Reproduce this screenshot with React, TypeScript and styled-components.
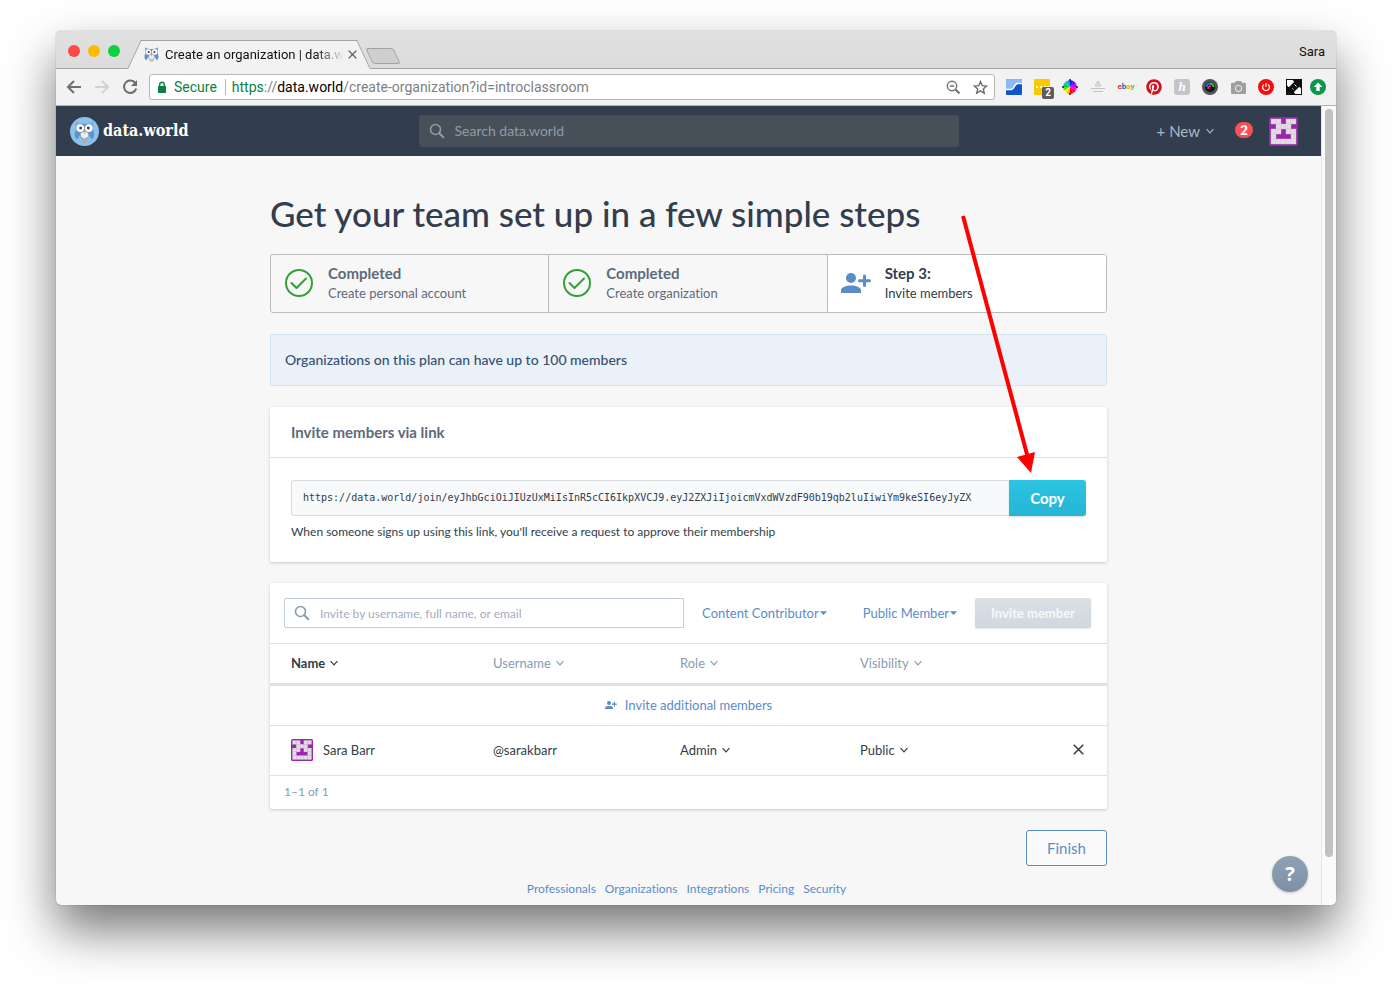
import React from "react";
import styled, { createGlobalStyle, css } from "styled-components";
import { FaPinterest, FaCamera } from "react-icons/fa";

const lato = `Lato, "Open Sans", sans-serif`;
const system = `Roboto, "Liberation Sans", sans-serif`;

const c = {
  navy: "#323d4d",
  ink: "#323d48",
  slate: "#5d6a7b",
  muted: "#8a9bb0",
  blue: "#5a8cc7",
  line: "#dbe1e8",
  page: "#f7f7f7",
  purple: "#9a26ad",
};

const GlobalStyle = createGlobalStyle`
  *, *::before, *::after { box-sizing: border-box; }
  body { margin: 0; background: #fff; font-family: ${lato}; color: ${c.ink}; font-variant-ligatures: no-common-ligatures; }
  button, input, select { font: inherit; color: inherit; margin: 0; }
  button { background: none; border: 0; padding: 0; cursor: pointer; }
  a { color: inherit; text-decoration: none; }
  svg { display: block; flex: none; }
`;

/* ---------- browser window ---------- */

const Desktop = styled.div`
  padding: 31px 56px 80px 56px;
  overflow: hidden;
`;

const Window = styled.div`
  border-radius: 5px;
  overflow: hidden;
  background: ${c.page};
  box-shadow: 0 0 1px rgba(0, 0, 0, 0.6), 0 25px 50px rgba(0, 0, 0, 0.54);
`;

const TabStrip = styled.div`
  display: flex;
  align-items: flex-end;
  height: 38px;
  padding: 0 11px 0 12px;
  background: linear-gradient(#e0e0e0, #dcdcdc);
  box-shadow: inset 0 -1px #a3a3a3;
  font-family: ${system};
`;

const Lights = styled.div`
  display: flex;
  align-self: center;
  gap: 8px;
  margin: 2px 14px 0 0;
`;

const Light = styled.button<{ $color: string }>`
  width: 12px;
  height: 12px;
  border-radius: 50%;
  background: ${(p) => p.$color};
`;

const Tab = styled.div`
  position: relative;
  display: flex;
  align-items: center;
  width: 230px;
  height: 29px;
  padding: 0 10px;
  &::before,
  &::after {
    content: "";
    position: absolute;
    top: 0;
    bottom: 0;
    width: 60%;
    background: #f2f2f2;
    border-top: 1px solid #a3a3a3;
  }
  &::before {
    left: 0;
    transform: skewX(-25deg);
    border-left: 1px solid #a3a3a3;
  }
  &::after {
    right: 0;
    transform: skewX(25deg);
    border-right: 1px solid #a3a3a3;
  }
  > * {
    position: relative;
    z-index: 1;
  }
`;

const TabTitle = styled.span`
  flex: 1;
  margin-left: 6px;
  font-size: 13px;
  line-height: 18px;
  color: #111;
  white-space: nowrap;
  mask-image: linear-gradient(to right, #000 84%, transparent);
`;

const TabClose = styled.button`
  margin: 0 0 0 4px;
  color: #555;
`;

const NewTab = styled.button`
  width: 28px;
  height: 16px;
  margin: 0 0 5px 5px;
  border: 1px solid #a3a3a3;
  border-radius: 3px;
  background: #cfcfcf;
  transform: skewX(25deg);
`;

const Profile = styled.button`
  align-self: center;
  margin-left: auto;
  margin-top: 2px;
  font-size: 13px;
  color: #111;
`;

const Toolbar = styled.div`
  display: flex;
  align-items: center;
  height: 37px;
  padding: 0 10px 0 10px;
  background: #f2f2f2;
  border-bottom: 1px solid #b4b4b4;
  font-family: ${system};
`;

const NavButtons = styled.div`
  display: flex;
  gap: 12px;
  color: #6e6e73;
`;

const NavButton = styled.button`
  &:disabled {
    color: #d2d2d2;
  }
`;

const Omnibox = styled.div`
  display: flex;
  flex: 1;
  align-items: center;
  height: 26px;
  margin: 0 11px;
  padding: 0 6px 0 7px;
  background: #fff;
  border: 1px solid #b6b6b6;
  border-radius: 3px;
  font-size: 14px;
  line-height: 20px;
`;

const Secure = styled.span`
  display: flex;
  align-items: center;
  gap: 7px;
  padding-right: 8px;
  margin-right: 6px;
  border-right: 1px solid #b6b6b6;
  line-height: 16px;
  color: #0b8043;
`;

const Url = styled.span`
  flex: 1;
  color: #808080;
  b {
    font-weight: 400;
    color: #0b8043;
  }
  em {
    font-style: normal;
    color: #000;
  }
`;

const OmniActions = styled.span`
  display: flex;
  gap: 12px;
  color: #6e6e73;
`;

const Extensions = styled.div`
  display: flex;
  gap: 12px;
  margin-right: 8px;
`;

const Extension = styled.button`
  position: relative;
  display: flex;
  align-items: center;
  justify-content: center;
  width: 16px;
  height: 16px;
`;

const ExtCount = styled.span`
  position: absolute;
  left: 8px;
  top: 8px;
  width: 12px;
  height: 12px;
  border-radius: 2px;
  background: #5c5c5c;
  color: #fff;
  font: 700 10px/12px ${system};
`;

const EbayMark = styled.span`
  font: 700 8px/16px ${system};
`;

const Tint = styled.span<{ $color: string }>`
  color: ${(p) => p.$color};
`;

const HoneyMark = styled.span`
  width: 16px;
  height: 16px;
  border-radius: 3px;
  background: #c3c5c8;
  color: #fff;
  font: italic 700 13px/16px "Liberation Serif", serif;
`;

const Viewport = styled.div`
  display: flex;
`;

const Page = styled.div`
  position: relative;
  flex: 1;
  min-width: 0;
`;

const ScrollTrack = styled.div`
  width: 15px;
  padding: 3px 3px 0;
  background: #fafafa;
  border-left: 1px solid #e6e6e6;
`;

const ScrollThumb = styled.div`
  width: 8px;
  height: 94%;
  border-radius: 4px;
  background: #c1c1c1;
`;

/* ---------- site header ---------- */

const SiteHeader = styled.header`
  display: grid;
  grid-template-columns: 1fr 540px 1fr;
  align-items: center;
  height: 50px;
  background: ${c.navy};
`;

const Brand = styled.a`
  display: flex;
  align-items: center;
  gap: 4px;
  padding-left: 14px;
  color: #fff;
  font: 700 16px/24px "DejaVu Serif Condensed", "DejaVu Serif", serif;
`;

const SiteSearch = styled.label`
  display: flex;
  align-items: center;
  gap: 10px;
  height: 32px;
  padding: 0 10px;
  border-radius: 3px;
  background: #475059;
  color: #8d9bab;
  input {
    flex: 1;
    min-width: 0;
    padding: 0;
    border: 0;
    outline: 0;
    background: none;
    font-size: 14px;
    line-height: 20px;
    &::placeholder {
      color: #8d9bab;
      opacity: 1;
    }
  }
`;

const HeaderActions = styled.div`
  display: flex;
  align-items: center;
  justify-content: flex-end;
  padding-right: 23px;
`;

const NewButton = styled.button`
  display: flex;
  align-items: center;
  gap: 6px;
  color: #a9b7cc;
  font-size: 15px;
  line-height: 20px;
`;

const Badge = styled.button`
  height: 16px;
  width: 18px;
  margin: 0 16px 2px 21px;
  border-radius: 8px;
  background: #fb4f57;
  color: #fff;
  font-size: 13px;
  font-weight: 900;
  line-height: 16px;
`;

/* ---------- page body ---------- */

const Main = styled.main`
  position: relative;
  width: 100%;
  max-width: 837px;
  margin: 0 auto;
  padding-top: 34px;
`;

const Title = styled.h1`
  margin: 0 0 18px;
  font-size: 35px;
  font-weight: 500;
  line-height: 46px;
  color: ${c.navy};
`;

const Steps = styled.ol`
  display: grid;
  grid-template-columns: repeat(3, 1fr);
  margin: 0 0 21px;
  padding: 0;
  list-style: none;
  border: 1px solid #b9bcbd;
  border-radius: 3px;
  overflow: hidden;
`;

const Step = styled.li<{ $active?: boolean }>`
  display: flex;
  align-items: center;
  gap: 14px;
  height: 57px;
  padding: 0 14px 2px 13px;
  color: ${(p) => (p.$active ? c.navy : c.slate)};
  background: ${(p) => (p.$active ? "#fff" : "transparent")};
  &:not(:last-child) {
    border-right: 1px solid #b9bcbd;
  }
  strong,
  span {
    display: block;
    line-height: 20px;
  }
  strong {
    font-size: 15px;
  }
  span {
    font-size: 13px;
  }
`;

const Notice = styled.p`
  margin: 0 0 21px;
  padding: 15px 14px;
  border: 1px solid #cfe4f0;
  border-radius: 3px;
  background: #eaf1f9;
  color: #36506f;
  font-size: 14px;
  font-weight: 500;
  line-height: 20px;
`;

const Card = styled.section`
  margin-bottom: 21px;
  background: #fff;
  border-radius: 2px;
  box-shadow: 0 1px 3px rgba(50, 61, 77, 0.25);
`;

const CardTitle = styled.h2`
  margin: 0;
  padding: 15px 21px;
  border-bottom: 1px solid ${c.line};
  font-size: 15px;
  line-height: 20px;
  color: ${c.slate};
`;

const CardBody = styled.div`
  padding: 22px 21px 20px;
`;

const LinkRow = styled.div`
  display: flex;
  height: 36px;
  margin-bottom: 6px;
`;

const LinkInput = styled.input`
  flex: 1;
  min-width: 0;
  padding: 0 9px 0 11px;
  border: 1px solid #d9dcdf;
  border-right: 0;
  border-radius: 3px 0 0 3px;
  background: #f8f9fb;
  font-family: "DejaVu Sans Mono", monospace;
  font-size: 10px;
  line-height: 16px;
`;

const CopyButton = styled.button`
  width: 77px;
  border-radius: 0 3px 3px 0;
  background: linear-gradient(#2bc4e3, #27b5d5);
  box-shadow: 0 1px 2px rgba(0, 0, 0, 0.15);
  color: #fff;
  font-size: 15px;
  font-weight: 700;
`;

const Hint = styled.p`
  margin: 0;
  font-size: 12px;
  line-height: 20px;
`;

const InviteBar = styled.form`
  display: flex;
  align-items: center;
  gap: 18px;
  padding: 15px 16px 15px 14px;
  border-bottom: 1px solid ${c.line};
  font-size: 13px;
`;

const InviteSearch = styled.label`
  display: flex;
  flex: 1;
  align-items: center;
  gap: 10px;
  height: 30px;
  padding: 0 9px;
  border: 1px solid #c3cedb;
  border-radius: 2px 0 0 2px;
  color: ${c.muted};
  input {
    flex: 1;
    min-width: 0;
    padding: 0;
    border: 0;
    outline: 0;
    background: none;
    font-size: 12px;
    &::placeholder {
      color: #a0aebf;
      opacity: 1;
    }
  }
`;

const Picker = styled.span<{ $tone?: string; $spaced?: boolean }>`
  display: inline-flex;
  align-items: center;
  gap: ${(p) => (p.$tone ? 1 : 5)}px;
  color: ${(p) => p.$tone || c.ink};
  ${(p) =>
    p.$spaced &&
    css`
      margin-right: 18px;
    `}
  select {
    appearance: none;
    field-sizing: content;
    padding: 0;
    border: 0;
    outline: 0;
    background: none;
    line-height: 20px;
  }
`;

const InviteButton = styled.button`
  width: 116px;
  height: 30px;
  border-radius: 2px;
  background: linear-gradient(#dbe0e6, #d1d7df);
  box-shadow: 0 1px 2px rgba(0, 0, 0, 0.1);
  color: #f6f8fa;
  font-size: 13px;
  font-weight: 700;
`;

const Members = styled.table`
  width: 100%;
  table-layout: fixed;
  border-collapse: separate;
  border-spacing: 0;
  font-size: 13px;
  line-height: 20px;
  th,
  td {
    padding: 0 21px 2px;
    text-align: left;
    border-bottom: 1px solid ${c.line};
  }
  th {
    height: 42px;
    border-bottom: 3px solid #dbe1e8;
    font-weight: 400;
  }
`;

const NameCol = styled.col`
  width: 202px;
`;
const UserCol = styled.col`
  width: 187px;
`;
const RoleCol = styled.col`
  width: 180px;
`;

const InviteRow = styled.tr`
  td {
    height: 40px;
    text-align: center;
  }
`;

const MemberRow = styled.tr`
  td {
    height: 50px;
  }
  td:last-child {
    padding-right: 23px;
    text-align: right;
  }
`;

const SortButton = styled.button<{ $active?: boolean }>`
  display: inline-flex;
  align-items: center;
  gap: 5px;
  color: ${(p) => (p.$active ? c.ink : c.muted)};
  font-weight: ${(p) => (p.$active ? 700 : 400)};
`;

const LinkButton = styled.button`
  display: inline-flex;
  align-items: center;
  gap: 8px;
  color: ${c.blue};
`;

const Person = styled.span`
  display: flex;
  align-items: center;
  gap: 10px;
`;

const Count = styled.p`
  margin: 0;
  padding: 6px 14px 7px;
  font-size: 12px;
  line-height: 20px;
  color: ${c.muted};
`;

const Actions = styled.div`
  display: flex;
  justify-content: flex-end;
`;

const FinishButton = styled.button`
  width: 81px;
  height: 36px;
  border: 1px solid ${c.blue};
  border-radius: 3px;
  background: #fafafa;
  color: ${c.blue};
  font-size: 15px;
`;

const FooterNav = styled.nav`
  display: flex;
  justify-content: center;
  gap: 9px;
  padding: 14px 4px 7px 0;
  font-size: 12px;
  line-height: 18px;
  color: ${c.blue};
`;

const HelpButton = styled.button`
  position: absolute;
  right: 13px;
  bottom: 13px;
  width: 36px;
  height: 36px;
  border-radius: 50%;
  background: linear-gradient(#8fa1b6, #7e90a6);
  box-shadow: 0 1px 3px rgba(0, 0, 0, 0.2);
  color: #fff;
  font: 700 20px/36px "Noto Sans", sans-serif;
`;

const Arrow = styled.svg`
  position: absolute;
  top: 58px;
  right: 70px;
  pointer-events: none;
`;

/* ---------- icons ---------- */

const Owl = ({ size, disc }: { size: number; disc?: boolean }) => (
  <svg width={size} height={size} viewBox="0 0 30 30" aria-hidden="true">
    {disc && <circle cx="15" cy="15" r="15" fill="#8cc1ec" />}
    <g transform={disc ? undefined : "translate(-6 -6) scale(1.4)"}>
      <path d="M6 5l5 2h8l5-2v9c2 4 1 8-2 9l-2-4c-1 3-3 4-5 4s-4-1-5-4l-2 4c-3-1-4-5-2-9z" fill="#5e92cb" />
      <path d="M6 5l5 2 4 4 4-4 5-2-1 4-8 4-8-4z" fill="#7fb0e0" />
      <path d="M11 17q4-4 8 0v3q-4 5-8 0z" fill="#f2ece4" />
      <circle cx="10.500" cy="11.500" r="4" fill="#fff" />
      <circle cx="19.500" cy="11.500" r="4" fill="#fff" />
      <circle cx="11" cy="11.500" r="1.500" fill="#3a3a3a" />
      <circle cx="19" cy="11.500" r="1.500" fill="#3a3a3a" />
      <path d="M13.500 14h3L15 18z" fill="#e8a552" />
      <path d="M12 24h6M13 26h4" stroke="#b7a48d" strokeWidth="1.200" />
    </g>
  </svg>
);

const avatarCells = ["11011", "01110", "11011", "10001", "11111"];

const Avatar = ({ size }: { size: number }) => (
  <svg width={size} height={size} viewBox="0 0 29 29" role="img" aria-label="Sara Barr">
    <rect width="29" height="29" rx="2" fill={c.purple} />
    {avatarCells.map((row, y) =>
      row.split("").map((cell, x) =>
        cell === "1" ? (
          <rect key={`${x}${y}`} x={2 + x * 5} y={2 + y * 5} width="5" height="5" fill="#e2dde4" stroke="#cfc2d3" strokeWidth="0.400" />
        ) : null
      )
    )}
  </svg>
);

const MemberPlus = ({ width, height }: { width: number; height: number }) => (
  <svg width={width} height={height} viewBox="0 0 30 20" fill={c.blue} aria-hidden="true">
    <circle cx="10" cy="5" r="5" />
    <path d="M0 20v-2.500C0 14 5 12.500 10 12.500s10 1.500 10 5V20z" />
    <path d="M23.500 3v9.500M18.500 7.700h10" stroke={c.blue} strokeWidth="3" strokeLinecap="round" />
  </svg>
);

const DoneIcon = () => (
  <svg width="30" height="30" viewBox="0 0 30 30" fill="none" stroke="#2fa136" strokeWidth="2" aria-hidden="true">
    <circle cx="15" cy="15" r="13" />
    <path d="M7.500 15l5 5L22 10.500" strokeLinecap="round" strokeLinejoin="round" />
  </svg>
);

const SearchIcon = () => (
  <svg width="16" height="16" viewBox="0 0 16 16" fill="none" stroke="currentColor" aria-hidden="true">
    <circle cx="6.500" cy="6.500" r="5" strokeWidth="1.600" />
    <path d="M10.300 10.300l4 4" strokeWidth="2" strokeLinecap="round" />
  </svg>
);

const Chevron = () => (
  <svg width="8" height="6" viewBox="0 0 8 6" fill="none" stroke="currentColor" strokeWidth="1.200" aria-hidden="true">
    <path d="M.6 1.200L4 4.800l3.400-3.600" />
  </svg>
);

const Caret = () => (
  <svg width="7" height="4" viewBox="0 0 7 4" fill="currentColor" aria-hidden="true">
    <path d="M0 .3h7L3.500 4z" />
  </svg>
);

const Cross = ({ size }: { size: number }) => (
  <svg width={size} height={size} viewBox="0 0 10 10" fill="none" stroke="currentColor" strokeWidth="1.400" aria-hidden="true">
    <path d="M.7.7l8.600 8.600M9.300.7L.7 9.300" />
  </svg>
);

const ArrowIcon = ({ flip }: { flip?: boolean }) => (
  <svg width="16" height="16" viewBox="0 0 16 16" fill="none" stroke="currentColor" strokeWidth="2" aria-hidden="true">
    <path d={flip ? "M1 8h13M8 2l6 6-6 6" : "M15 8H2M8 2L2 8l6 6"} />
  </svg>
);

const hues = ["#f0f", "#f06", "#f00", "#fa0", "#ff0", "#6d0", "#0c4", "#0cc", "#09f", "#02f", "#70f", "#c0f"];
const wheelPoint = (i: number) => {
  const a = (i / 12) * Math.PI * 2;
  return `${8 + 7 * Math.cos(a)} ${8 + 7 * Math.sin(a)}`;
};

/* ---------- data ---------- */

const joinLink =
  "https://data.world/join/eyJhbGciOiJIUzUxMiIsInR5cCI6IkpXVCJ9.eyJ2ZXJiIjoicmVxdWVzdF90b19qb2luIiwiYm9keSI6eyJyZX";

const footerLinks = ["Professionals", "Organizations", "Integrations", "Pricing", "Security"];

const columns = ["Name", "Username", "Role", "Visibility"];

const BrowserChrome = () => (
  <>
    <TabStrip>
      <Lights>
        <Light $color="#fc4a48" aria-label="Close window" />
        <Light $color="#fdbc02" aria-label="Minimize window" />
        <Light $color="#07d33f" aria-label="Zoom window" />
      </Lights>
      <Tab>
        <Owl size={15} />
        <TabTitle>Create an organization | data.w</TabTitle>
        <TabClose aria-label="Close tab">
          <Cross size={9} />
        </TabClose>
      </Tab>
      <NewTab aria-label="New tab" />
      <Profile>Sara</Profile>
    </TabStrip>
    <Toolbar>
      <NavButtons>
        <NavButton aria-label="Back"><ArrowIcon /></NavButton>
        <NavButton aria-label="Forward" disabled><ArrowIcon flip /></NavButton>
        <NavButton aria-label="Reload">
          <svg width="16" height="16" viewBox="0 0 16 16" aria-hidden="true">
            <path d="M13.300 4.200A6.200 6.200 0 1 0 14.200 9.500" fill="none" stroke="currentColor" strokeWidth="2" />
            <path d="M15 1v6H9z" fill="currentColor" />
          </svg>
        </NavButton>
      </NavButtons>
      <Omnibox>
        <Secure>
          <svg width="10" height="12" viewBox="0 0 10 12" aria-hidden="true">
            <rect x="1" y="5" width="8" height="7" rx="0.500" fill="currentColor" />
            <path d="M2.700 5.500V3.500a2.300 2.300 0 0 1 4.600 0v2" fill="none" stroke="currentColor" strokeWidth="1.400" />
          </svg>
          Secure
        </Secure>
        <Url>
          <b>https</b>://<em>data.world</em>/create-organization?id=introclassroom
        </Url>
        <OmniActions>
          <svg width="15" height="15" viewBox="0 0 15 15" fill="none" stroke="currentColor" aria-hidden="true">
            <circle cx="6" cy="6" r="4.700" strokeWidth="1.400" />
            <path d="M3.800 6h4.400" strokeWidth="1.300" />
            <path d="M9.500 9.500l4 4" strokeWidth="1.900" />
          </svg>
          <svg width="15" height="15" viewBox="0 0 15 15" fill="none" stroke="currentColor" strokeWidth="1.400" aria-hidden="true">
            <path d="M7.500 1.600l1.700 4 4.400.4-3.300 2.900 1 4.300-3.800-2.300-3.800 2.300 1-4.300L1.400 6l4.400-.4z" />
          </svg>
        </OmniActions>
      </Omnibox>
      <Extensions>
        <Extension aria-label="Analytics">
          <svg width="16" height="16" viewBox="0 0 16 16">
            <rect width="16" height="16" rx="1" fill="#0b57c9" />
            <path d="M0 1a1 1 0 0 1 1-1h14a1 1 0 0 1 1 1v3h-5L7 10H0z" fill="#8cb8f5" />
            <path d="M0 10.500h5.500Q7 10.500 8 8t3-3.500h5" fill="none" stroke="#fff" strokeWidth="1.500" />
          </svg>
        </Extension>
        <Extension aria-label="Notes, 2 new">
          <svg width="16" height="16" viewBox="0 0 16 16">
            <rect width="16" height="16" rx="1" fill="#fbc900" />
            <path d="M2 8h2M6 8h2M10 8h2M13 8h2" stroke="#fff" strokeWidth="2" />
          </svg>
          <ExtCount>2</ExtCount>
        </Extension>
        <Extension aria-label="Color picker">
          <svg width="16" height="16" viewBox="0 0 16 16">
            {hues.map((h, i) => (
              <path key={h} d={`M8 8L${wheelPoint(i)} L${wheelPoint(i + 1)}z`} fill={h} />
            ))}
            <path d="M8 0v2M8 14v2M0 8h2M14 8h2" stroke="#222" strokeWidth="1.500" />
          </svg>
        </Extension>
        <Extension aria-label="Archive">
          <svg width="16" height="16" viewBox="0 0 16 16" fill="none" stroke="#c2c2c2">
            <path d="M8 2v5M5 7l3-5 3 5zM1 9.500h14M3 12.500h10" />
          </svg>
        </Extension>
        <Extension aria-label="eBay">
          <EbayMark>
            <Tint $color="#e53238">e</Tint>
            <Tint $color="#0064d2">b</Tint>
            <Tint $color="#f5af02">a</Tint>
            <Tint $color="#86b817">y</Tint>
          </EbayMark>
        </Extension>
        <Extension aria-label="Pinterest"><FaPinterest size={16} color="#d4101d" /></Extension>
        <Extension aria-label="Honey"><HoneyMark>h</HoneyMark></Extension>
        <Extension aria-label="Lens">
          <svg width="16" height="16" viewBox="0 0 16 16" fill="none">
            <circle cx="8" cy="8" r="8" fill="#50555b" />
            <circle cx="8" cy="8" r="5" fill="#111" />
            <path d="M4.500 8A3.500 3.500 0 0 1 8 4.500" stroke="#2a6df0" strokeWidth="2" />
            <path d="M8 4.500A3.500 3.500 0 0 1 11.500 8" stroke="#35c24a" strokeWidth="2" />
            <path d="M6 10q0-3 3-3" stroke="#e8336d" strokeWidth="1.500" />
          </svg>
        </Extension>
        <Extension aria-label="Screenshot">
          <FaCamera size={15} color="#9f9f9f" />
        </Extension>
        <Extension aria-label="Power">
          <svg width="16" height="16" viewBox="0 0 16 16" fill="none" stroke="#fff" strokeWidth="1.200">
            <circle cx="8" cy="8" r="8" fill="#f60d0d" stroke="none" />
            <path d="M6 5.400a3.400 3.400 0 1 0 4 0M8 4v4" />
          </svg>
        </Extension>
        <Extension aria-label="Full screen">
          <svg width="16" height="16" viewBox="0 0 16 16">
            <rect width="16" height="16" fill="#111" />
            <path d="M1 1h7v2H3v5H1zM15 15H8v-2h5V8h2z" fill="#fff" />
            <path d="M3 3h5L3 8zM13 13H8l5-5z" fill="#fff" />
            <path d="M8.500 1.500h6v6zM1.500 8.500v6h6zM4 12l8-8" stroke="#111" strokeWidth="2" fill="#111" />
            <path d="M6.500 9.500l1 1M8.500 5.500l2 2" stroke="#fff" />
          </svg>
        </Extension>
      </Extensions>
      <Extension aria-label="Update available">
        <svg width="16" height="16" viewBox="0 0 16 16">
          <circle cx="8" cy="8" r="8" fill="#0b9848" />
          <path d="M8 3.500l4.300 4.500H9.700v4H6.300V8H3.700z" fill="#fff" />
        </svg>
      </Extension>
    </Toolbar>
  </>
);

const Header = () => (
  <SiteHeader>
    <Brand href="#home">
      <Owl size={29} disc />
      data.world
    </Brand>
    <SiteSearch>
      <SearchIcon />
      <input type="search" placeholder="Search data.world" aria-label="Search data.world" />
    </SiteSearch>
    <HeaderActions>
      <NewButton>
        + New
        <Chevron />
      </NewButton>
      <Badge aria-label="2 notifications">2</Badge>
      <button aria-label="Account">
        <Avatar size={29} />
      </button>
    </HeaderActions>
  </SiteHeader>
);

export default function App() {
  return (
    <Desktop>
      <GlobalStyle />
      <Window>
        <BrowserChrome />
        <Viewport>
          <Page>
            <Header />
            <Main>
              <Title>Get your team set up in a few simple steps</Title>
              <Steps>
                <Step>
                  <DoneIcon />
                  <div>
                    <strong>Completed</strong>
                    <span>Create personal account</span>
                  </div>
                </Step>
                <Step>
                  <DoneIcon />
                  <div>
                    <strong>Completed</strong>
                    <span>Create organization</span>
                  </div>
                </Step>
                <Step $active aria-current="step">
                  <MemberPlus width={30} height={20} />
                  <div>
                    <strong>Step 3:</strong>
                    <span>Invite members</span>
                  </div>
                </Step>
              </Steps>
              <Notice>Organizations on this plan can have up to 100 members</Notice>
              <Card>
                <CardTitle>Invite members via link</CardTitle>
                <CardBody>
                  <LinkRow>
                    <LinkInput readOnly value={joinLink} aria-label="Invite link" />
                    <CopyButton>Copy</CopyButton>
                  </LinkRow>
                  <Hint>When someone signs up using this link, you'll receive a request to approve their membership</Hint>
                </CardBody>
              </Card>
              <Card>
                <InviteBar onSubmit={(e) => e.preventDefault()}>
                  <InviteSearch>
                    <SearchIcon />
                    <input placeholder="Invite by username, full name, or email" aria-label="Invite by username, full name, or email" />
                  </InviteSearch>
                  <Picker $tone={c.blue} $spaced>
                    <select aria-label="Role for new member">
                      <option>Content Contributor</option>
                    </select>
                    <Caret />
                  </Picker>
                  <Picker $tone={c.blue}>
                    <select aria-label="Visibility for new member">
                      <option>Public Member</option>
                    </select>
                    <Caret />
                  </Picker>
                  <InviteButton disabled>Invite member</InviteButton>
                </InviteBar>
                <Members aria-label="Members">
                  <colgroup>
                    <NameCol />
                    <UserCol />
                    <RoleCol />
                    <col />
                  </colgroup>
                  <thead>
                    <tr>
                      {columns.map((name, i) => (
                        <th key={name} scope="col">
                          <SortButton $active={i === 0}>
                            {name}
                            <Chevron />
                          </SortButton>
                        </th>
                      ))}
                      <th aria-label="Remove" />
                    </tr>
                  </thead>
                  <tbody>
                    <InviteRow>
                      <td colSpan={5}>
                        <LinkButton>
                          <MemberPlus width={12} height={8} />
                          Invite additional members
                        </LinkButton>
                      </td>
                    </InviteRow>
                    <MemberRow>
                      <td>
                        <Person>
                          <Avatar size={22} />
                          Sara Barr
                        </Person>
                      </td>
                      <td>@sarakbarr</td>
                      <td>
                        <Picker>
                          <select aria-label="Role of Sara Barr">
                            <option>Admin</option>
                          </select>
                          <Chevron />
                        </Picker>
                      </td>
                      <td>
                        <Picker>
                          <select aria-label="Visibility of Sara Barr">
                            <option>Public</option>
                          </select>
                          <Chevron />
                        </Picker>
                      </td>
                      <td>
                        <button aria-label="Remove Sara Barr">
                          <Cross size={11} />
                        </button>
                      </td>
                    </MemberRow>
                  </tbody>
                </Members>
                <Count>1–1 of 1</Count>
              </Card>
              <Actions>
                <FinishButton>Finish</FinishButton>
              </Actions>
              <Arrow width="80" height="260" viewBox="0 0 80 260" aria-hidden="true">
                <path d="M6 2l65 242" stroke="#f00" strokeWidth="4" />
                <path d="M60 243l18-5-4 21z" fill="#f00" />
              </Arrow>
            </Main>
            <FooterNav aria-label="Footer">
              {footerLinks.map((name) => (
                <a key={name} href={`#${name.toLowerCase()}`}>
                  {name}
                </a>
              ))}
            </FooterNav>
            <HelpButton aria-label="Help">?</HelpButton>
          </Page>
          <ScrollTrack>
            <ScrollThumb />
          </ScrollTrack>
        </Viewport>
      </Window>
    </Desktop>
  );
}
